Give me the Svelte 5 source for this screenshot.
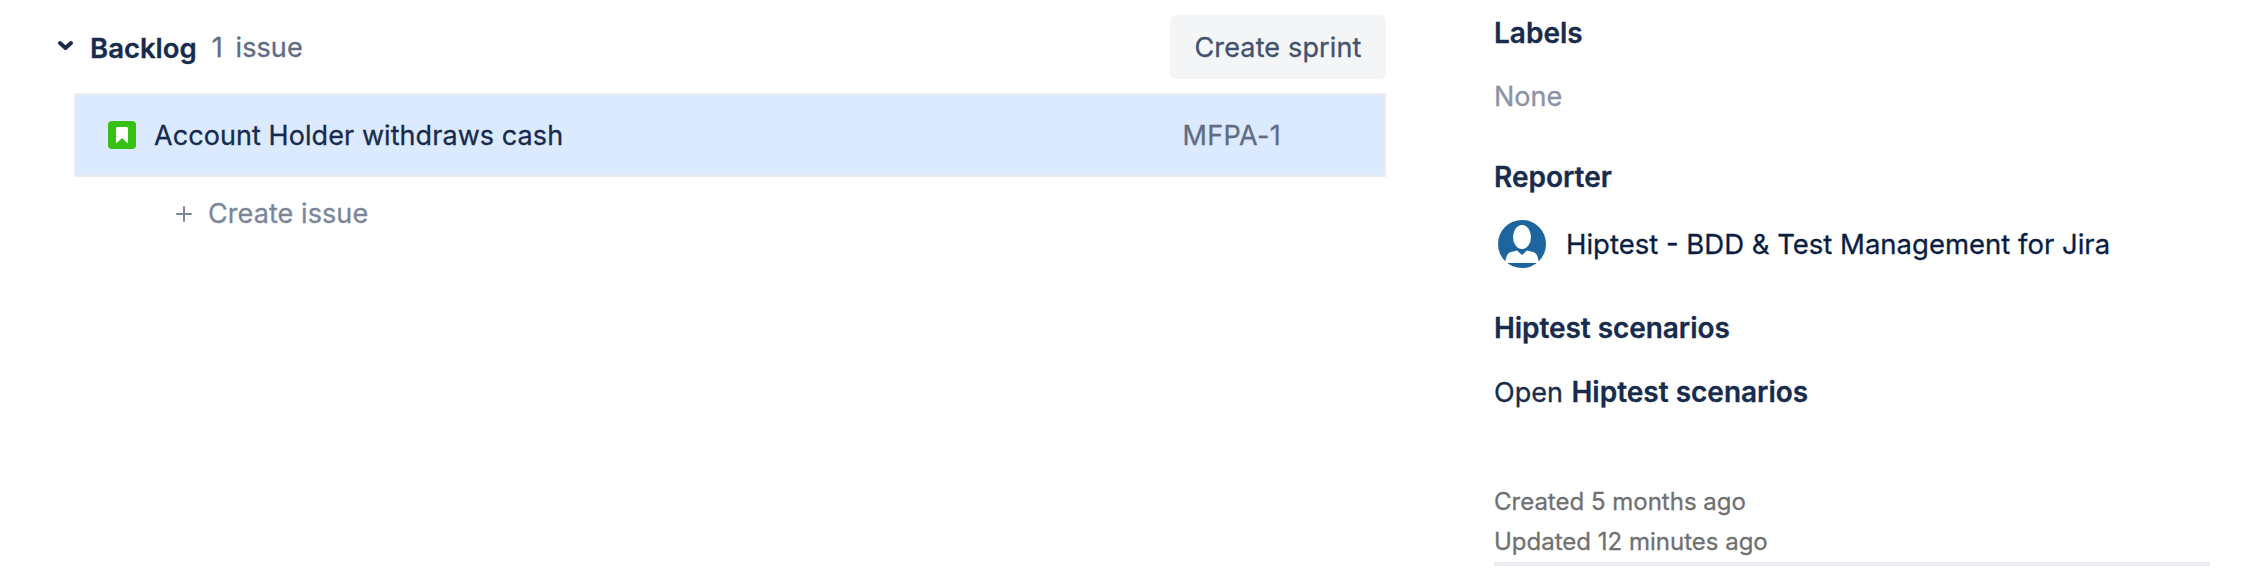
<script lang="ts">
	let issue = { summary: 'Account Holder withdraws cash', key: 'MFPA-1' };
	let reporter = 'Hiptest - BDD & Test Management for Jira';
	let dates = ['Created 5 months ago', 'Updated 12 minutes ago'];
</script>

<div class="page">
	<main class="backlog">
		<header class="backlog-header">
			<svg class="chevron" width="18" height="12" viewBox="0 0 18 12">
				<path d="M3 3l5.500 5L14 3" />
			</svg>
			<h2>Backlog</h2>
			<span class="count">1 issue</span>
			<button type="button" class="sprint-button">Create sprint</button>
		</header>

		<div class="issue-row">
			<!-- Story type icon -->
			<svg class="story-icon" width="28" height="28" viewBox="0 0 28 28">
				<rect width="28" height="28" rx="4" fill="#36c013" />
				<path d="M8 7.500q0-1.500 1.500-1.500h9q1.500 0 1.500 1.500V22h-.800L14 17l-5.200 5H8z" fill="#fff" />
			</svg>
			<span class="summary">{issue.summary}</span>
			<span class="key">{issue.key}</span>
		</div>

		<button type="button" class="create-issue">
			<svg width="16" height="16" viewBox="0 0 16 16">
				<path d="M8 1v14M1 8h14" />
			</svg>
			<span>Create issue</span>
		</button>
	</main>

	<aside class="details">
		<section>
			<h3>Labels</h3>
			<p class="none">None</p>
		</section>

		<section>
			<h3>Reporter</h3>
			<div class="reporter">
				<svg width="48" height="48" viewBox="0 0 48 48">
					<circle cx="24" cy="24" r="24" fill="#1d659f" />
					<ellipse cx="24" cy="17" rx="9" ry="12" fill="#fff" />
					<path d="M7 43c1-6 2-10 6-11l6-1.500 5 4.500 5-4.500 6 1.500c4 1 5 5 6 11z" fill="#fff" />
				</svg>
				<span>{reporter}</span>
			</div>
		</section>

		<section>
			<h3 class="scenarios">Hiptest scenarios</h3>
			<p class="open">Open <strong>Hiptest scenarios</strong></p>
		</section>

		<footer class="dates">
			{#each dates as date}
				<div>{date}</div>
			{/each}
		</footer>
	</aside>
</div>

<style>
	:global(body) {
		margin: 0;
		background: #fff;
	}

	.page {
		display: flex;
		height: 585px;
		overflow: hidden;
		font-family: Inter, 'Liberation Sans', sans-serif;
		font-size: 27px;
		line-height: 40px;
		color: #172b4d;
		-webkit-text-stroke: 0.3px;
	}

	h2,
	h3,
	p {
		margin: 0;
	}

	h2,
	h3,
	strong {
		font-weight: 600;
	}

	h2 {
		font-size: 27.5px;
	}

	h3,
	strong {
		font-size: 28px;
	}

	button {
		border: 0;
		font: inherit;
		cursor: pointer;
	}

	.backlog {
		width: 1329px;
		padding: 15px 0 0 57px;
	}

	.backlog-header {
		display: flex;
		align-items: center;
		height: 64px;
		margin-bottom: 14px;
	}

	.backlog-header h2,
	.count {
		padding-top: 2px;
	}

	.chevron {
		margin: 0 15px 3px 0;
	}

	.chevron path {
		fill: none;
		stroke: #172b4d;
		stroke-width: 4;
		stroke-linecap: round;
		stroke-linejoin: round;
	}

	.count {
		margin-left: 15px;
		color: #5e6c84;
		letter-spacing: 0.1px;
		word-spacing: 5px;
	}

	.sprint-button {
		width: 216px;
		height: 64px;
		margin-left: auto;
		padding: 2px 0 0;
		border-radius: 6px;
		background: #f4f5f7;
		color: #42526e;
		letter-spacing: 0.15px;
	}

	.issue-row {
		display: flex;
		align-items: center;
		box-sizing: border-box;
		height: 84px;
		margin-left: 17px;
		padding: 0 103px 0 32px;
		border: 2px solid #ebecf0;
		background: #dceaff;
	}

	.summary {
		margin-left: 18px;
		padding-top: 2px;
		letter-spacing: 0.07px;
	}

	.key {
		margin-left: auto;
		padding-top: 2px;
		color: #5e6c84;
		letter-spacing: 0.3px;
	}

	.create-issue {
		display: flex;
		align-items: center;
		gap: 16px;
		margin: 17px 0 0 119px;
		padding: 0;
		background: none;
		color: #7a869a;
		letter-spacing: 0.08px;
	}

	.create-issue path {
		stroke: #7a869a;
		stroke-width: 2;
		stroke-linecap: round;
	}

	.details {
		width: 716px;
		margin-left: 108px;
		padding-top: 13px;
	}

	section {
		margin-bottom: 40px;
	}

	h3 {
		margin-bottom: 24px;
	}

	.scenarios {
		letter-spacing: -0.06px;
	}

	.none {
		color: #8993a4;
	}

	.open {
		word-spacing: 1px;
	}

	.open strong {
		word-spacing: 0;
	}

	.reporter {
		display: flex;
		align-items: center;
		gap: 20px;
		margin: -1px 0 1px 4px;
		font-size: 27.5px;
		color: #091e42;
	}

	.dates {
		margin-top: 69px;
		border-bottom: 4px solid #ebecf0;
		font-size: 24px;
		color: #707070;
	}
</style>
